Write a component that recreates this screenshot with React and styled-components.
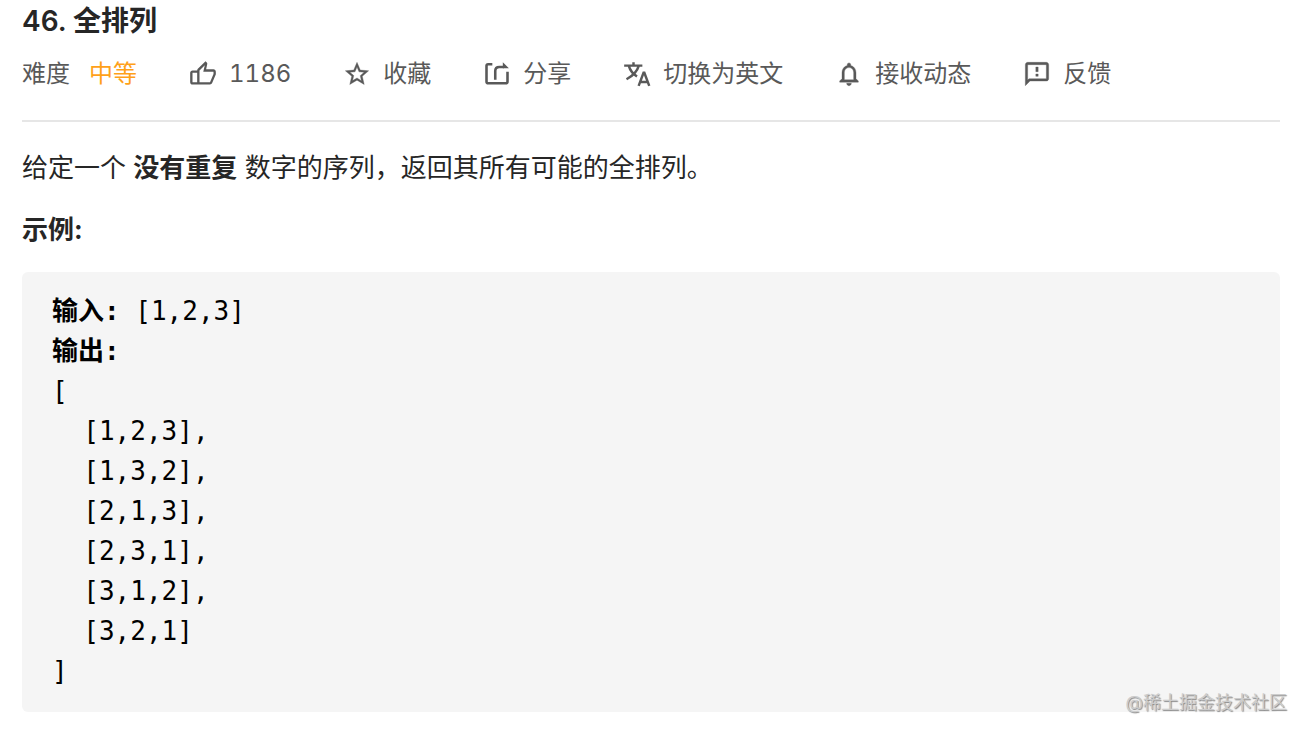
import React from "react";
import styled, { createGlobalStyle } from "styled-components";
import {
  MdStarBorder,
  MdNotificationsNone,
  MdOutlineFeedback,
} from "react-icons/md";

const results = [
  [1, 2, 3],
  [1, 3, 2],
  [2, 1, 3],
  [2, 3, 1],
  [3, 1, 2],
  [3, 2, 1],
];

const LikeIcon = () => (
  <svg viewBox="0 0 24 24" fill="currentColor" aria-hidden="true">
    <path
      fillRule="evenodd"
      d="M14.17 1l1.06 1.06c.27.27.44.65.44 1.06l-.03.32L14.69 8H21c1.1 0 2 .9 2 2v2c0 .26-.05.5-.14.73l-3.02 7.05C19.54 20.5 18.83 21 18 21H3c-1.1 0-2-.9-2-2v-8c0-1.1.9-2 2-2h4c0-.55.22-1.05.58-1.41L14.17 1zM9 19h9l3-7v-2h-8.77l1.3-5.54L9 9v10zM7 19v-8H3v8h4z"
    />
  </svg>
);

const ShareIcon = () => (
  <svg
    viewBox="0 0 24 24"
    fill="none"
    stroke="currentColor"
    strokeWidth="2.2"
    aria-hidden="true"
  >
    <path d="M8 3.6H4.4Q3 3.6 3 5v13.4Q3 20 4.6 20h14.8Q21 20 21 18.4V10" />
    <path d="M10.5 17V9.5Q10.5 6 14 6H18" />
    <path d="M17 2l5.2 5.1H17z" fill="currentColor" stroke="none" />
  </svg>
);

const TranslateIcon = () => (
  <svg
    viewBox="0 0 24 24"
    fill="none"
    stroke="currentColor"
    strokeWidth="2.1"
    aria-hidden="true"
  >
    <path d="M1 4.8h15.6M9 2v3M5 5q1.5 5.5 7 9.2M13.5 5Q11.5 12 3 16.5" />
    <path d="M13.4 22.2l4.2-11.2h.7l4.2 11.2M14.8 18.8h6.3" />
  </svg>
);

const actions = [
  { label: "1186", icon: <LikeIcon /> },
  { label: "收藏", icon: <MdStarBorder strokeWidth="0.3" /> },
  { label: "分享", icon: <ShareIcon /> },
  { label: "切换为英文", icon: <TranslateIcon /> },
  { label: "接收动态", icon: <MdNotificationsNone strokeWidth="0.3" /> },
  { label: "反馈", icon: <MdOutlineFeedback strokeWidth="0.3" /> },
];

const App = () => {
  return (
    <>
      <GlobalStyle />
      <Problem>
        <Header>
          <Title>46. 全排列</Title>
          <Toolbar>
            <Difficulty>
              <span>难度</span>
              <Level>中等</Level>
            </Difficulty>
            {actions.map((action) => (
              <ActionButton type="button" key={action.label}>
                {action.icon}
                <span>{action.label}</span>
              </ActionButton>
            ))}
          </Toolbar>
        </Header>
        <Content lang="zh-CN">
          <Paragraph>
            给定一个 <strong>没有重复</strong>{" "}
            数字的序列&#xFF0C;返回其所有可能的全排列。
          </Paragraph>
          <Paragraph>
            <strong>示例:</strong>
          </Paragraph>
          <ExampleBox>
            <Code>
              <strong>输入:</strong> [1,2,3]{"\n"}
              <strong>输出:</strong>
              {"\n[\n"}
              {results.map((row) => `  [${row.join(",")}]`).join(",\n")}
              {"\n]"}
            </Code>
            <Watermark>@稀土掘金技术社区</Watermark>
          </ExampleBox>
        </Content>
      </Problem>
    </>
  );
};

const GlobalStyle = createGlobalStyle`
  * {
    box-sizing: border-box;
  }
  body {
    margin: 0;
    background-color: white;
    color: #262626;
    font-family: Inter, "Noto Sans CJK SC", sans-serif;
  }
`;

const Problem = styled.main`
  padding: 1px 28px 22px 22px;
`;

const Header = styled.header`
  padding-bottom: 32px;
  border-bottom: 2px solid #e6e6e6;
`;

const Title = styled.h1`
  margin: 0;
  font-size: 28px;
  font-weight: 600;
  line-height: 40px;
`;

const Toolbar = styled.div`
  display: flex;
  flex-wrap: wrap;
  gap: 20px 52px;
  margin-top: 19px;
  color: #595959;
  font-size: 24px;
  line-height: 28px;
`;

const Difficulty = styled.div`
  display: flex;
  gap: 19px;
`;

const Level = styled.span`
  color: #ffa119;
`;

const ActionButton = styled.button`
  display: flex;
  align-items: center;
  gap: 12px;
  padding: 0;
  border: 0;
  background: none;
  color: inherit;
  font: inherit;
  font-variant-numeric: tabular-nums;
  cursor: pointer;
  svg {
    width: 28px;
    height: 28px;
  }
  /* react-icons bounding box */
  path[fill="none"] {
    stroke: none;
  }
`;

const Content = styled.section`
  display: flex;
  flex-direction: column;
  gap: 22px;
  padding-top: 26px;
`;

const Paragraph = styled.p`
  margin: 0;
  font-size: 26px;
  line-height: 40px;
`;

const ExampleBox = styled.div`
  position: relative;
`;

const Code = styled.pre`
  margin: 0;
  padding: 19px 30px 21px;
  border-radius: 6px;
  background-color: #f5f5f5;
  color: black;
  font-family: "DejaVu Sans Mono", "Noto Sans CJK SC", monospace;
  font-size: 26px;
  line-height: 40px;
`;

const Watermark = styled.span`
  position: absolute;
  right: -7px;
  bottom: -4px;
  color: #ccc;
  font-size: 18px;
  line-height: 26px;
  text-shadow: 1px 1px 1px #888;
`;

export default App;
